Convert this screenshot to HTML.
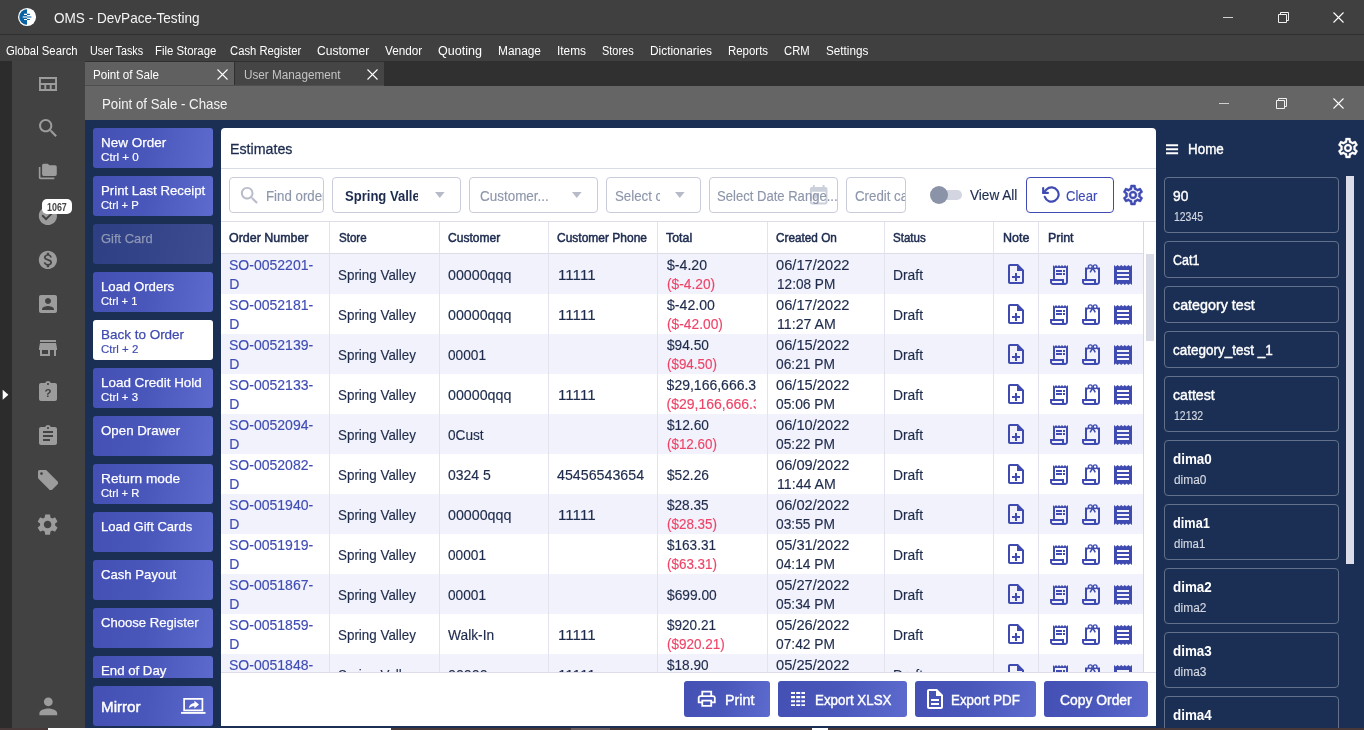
<!DOCTYPE html>
<html><head><meta charset="utf-8">
<style>
*{box-sizing:border-box;margin:0;padding:0}
html,body{width:1364px;height:730px;overflow:hidden;background:#404040;font-family:"Liberation Sans",sans-serif;}
.abs{position:absolute}
.t{position:absolute;white-space:nowrap;transform-origin:0 0;display:block}
.clip{position:absolute;overflow:hidden}
</style></head><body>
<svg width="0" height="0" style="position:absolute">
<defs>
<symbol id="i-note" viewBox="0 0 24 24"><path fill="#3f4bb0" d="M14 2H6c-1.100 0-2 .9-2 2v16c0 1.100.89 2 1.990 2H18c1.100 0 2-.9 2-2V8l-6-6zM6 20V4h7v5h5v11H6zm5-1h2v-3h3v-2h-3v-3h-2v3H8v2h3v3z"/></symbol>
<symbol id="i-r1" viewBox="0 0 24 24"><path fill="#3f4bb0" d="M19.500 3.500 18 2l-1.500 1.500L15 2l-1.500 1.500L12 2l-1.500 1.500L9 2 7.500 3.500 6 2v14H3v3c0 1.660 1.340 3 3 3h12c1.660 0 3-1.340 3-3V2l-1.500 1.500zM15 20H6c-.55 0-1-.45-1-1v-1h10v2zm4-1c0 .55-.45 1-1 1s-1-.45-1-1v-3H8V5h11v14z"/><path fill="#3f4bb0" d="M9 7h6v2H9zm7 0h2v2h-2zm-7 3h6v2H9zm7 0h2v2h-2z"/></symbol>
<symbol id="i-r2" viewBox="0 0 24 24"><path fill="#3f4bb0" d="M6 4.500V16H3v3c0 1.660 1.340 3 3 3h12c1.660 0 3-1.340 3-3V4.500h-3v2H19V19c0 .55-.45 1-1 1s-1-.45-1-1v-3H8V6.500h1.400v-2H6zM15 20H6c-.55 0-1-.45-1-1v-1h10v2z"/><g fill="none" stroke="#3f4bb0"><ellipse cx="11.300" cy="3.700" rx="1.900" ry="1.800" stroke-width="1.400"/><ellipse cx="16.100" cy="3.700" rx="1.900" ry="1.800" stroke-width="1.400"/><path d="M13.700 5L11.100 9.400M13.700 5l2.600 4.400" stroke-width="1.500"/></g></symbol>
<symbol id="i-r3" viewBox="0 0 24 24"><path fill="#3f4bb0" fill-rule="evenodd" d="M3 2L4.8 3.600L6.6 2L8.4 3.600L10.2 2L12.0 3.600L13.8 2L15.6 3.600L17.4 2L19.2 3.600L21 2V22L19.2 20.400L17.4 22L15.6 20.400L13.8 22L12.0 20.400L10.2 22L8.4 20.400L6.6 22L4.8 20.400L3 22zM18 17H6v-2h12v2zm0-4H6v-2h12v2zm0-4H6V7h12v2z"/></symbol>
</defs></svg>
<div id="root" style="position:absolute;left:0;top:0;width:1364px;height:730px;will-change:transform">
<div class="abs" style="left:0;top:0;width:1364px;height:34px;background:#404040"></div>
<div class="abs" style="left:0;top:34px;width:1364px;height:1px;background:#2f2f2f"></div>
<div class="abs" style="left:0;top:35px;width:1364px;height:26px;background:#404040"></div>
<svg class="abs" style="left:17px;top:7px" width="20" height="20" viewBox="0 0 20 20"><circle cx="10.050" cy="10" r="9.050" fill="#fff"/><path d="M10 2.250A7.750 7.750 0 0 0 10 17.750z" fill="#0b62a3"/><path d="M10 7.350h2.900M10 12.450h2.900" stroke="#0b62a3" stroke-width="1.050"/><path d="M10 10h4.400" stroke="#4f8fc0" stroke-width="1.500"/><path d="M7 7.350h3M7 12.450h3" stroke="#fff" stroke-width="1.050"/><path d="M5.700 10H10" stroke="#c5d9ea" stroke-width="1.500"/></svg>
<span class="t" style="left:54.00px;top:9px;font-size:15px;line-height:17px;height:17px;color:#f4f4f4;transform:scaleX(0.9044);">OMS - DevPace-Testing</span>
<div class="abs" style="left:1223px;top:17px;width:10px;height:1px;background:#d0d0d0"></div>
<svg class="abs" style="left:1278px;top:12px" width="12" height="11"><path d="M2.500 2.500V.5h8v8h-2M.5 2.500h8v8h-8z" stroke="#f0f0f0" fill="none" stroke-width="1"/></svg>
<svg class="abs" style="left:1333px;top:12px" width="11" height="11"><path d="M.5 .5l10 10M10.500 .5l-10 10" stroke="#fff" stroke-width="1.100"/></svg>
<span class="t" style="left:6.00px;top:44px;font-size:12.5px;line-height:14px;height:14px;color:#fff;transform:scaleX(0.9042);">Global Search</span>
<span class="t" style="left:90.00px;top:44px;font-size:12.5px;line-height:14px;height:14px;color:#fff;transform:scaleX(0.8609);">User Tasks</span>
<span class="t" style="left:155.00px;top:44px;font-size:12.5px;line-height:14px;height:14px;color:#fff;transform:scaleX(0.9098);">File Storage</span>
<span class="t" style="left:230.00px;top:44px;font-size:12.5px;line-height:14px;height:14px;color:#fff;transform:scaleX(0.9004);">Cash Register</span>
<span class="t" style="left:317.00px;top:44px;font-size:12.5px;line-height:14px;height:14px;color:#fff;transform:scaleX(0.9652);">Customer</span>
<span class="t" style="left:385.00px;top:44px;font-size:12.5px;line-height:14px;height:14px;color:#fff;transform:scaleX(0.9413);">Vendor</span>
<span class="t" style="left:438.00px;top:44px;font-size:12.5px;line-height:14px;height:14px;color:#fff;transform:scaleX(1.0043);">Quoting</span>
<span class="t" style="left:498.30px;top:44px;font-size:12.5px;line-height:14px;height:14px;color:#fff;transform:scaleX(0.9516);">Manage</span>
<span class="t" style="left:557.00px;top:44px;font-size:12.5px;line-height:14px;height:14px;color:#fff;transform:scaleX(0.9489);">Items</span>
<span class="t" style="left:602.00px;top:44px;font-size:12.5px;line-height:14px;height:14px;color:#fff;transform:scaleX(0.8747);">Stores</span>
<span class="t" style="left:650.00px;top:44px;font-size:12.5px;line-height:14px;height:14px;color:#fff;transform:scaleX(0.9493);">Dictionaries</span>
<span class="t" style="left:728.00px;top:44px;font-size:12.5px;line-height:14px;height:14px;color:#fff;transform:scaleX(0.9143);">Reports</span>
<span class="t" style="left:784.00px;top:44px;font-size:12.5px;line-height:14px;height:14px;color:#fff;transform:scaleX(0.9002);">CRM</span>
<span class="t" style="left:825.70px;top:44px;font-size:12.5px;line-height:14px;height:14px;color:#fff;transform:scaleX(0.9361);">Settings</span>
<div class="abs" style="left:0;top:61px;width:1364px;height:25px;background:#303030"></div>
<div class="abs" style="left:0;top:61px;width:12px;height:667px;background:#2c2c2c"></div>
<div class="abs" style="left:12px;top:61px;width:73px;height:667px;background:#424242"></div>
<div class="abs" style="left:85px;top:62px;width:149px;height:24px;background:#606060"></div>
<div class="abs" style="left:235px;top:62px;width:149px;height:24px;background:#454545"></div>
<div class="abs" style="left:85px;top:85px;width:299px;height:1px;background:#4e4e4e"></div>
<span class="t" style="left:93.40px;top:68px;font-size:12.5px;line-height:14px;height:14px;color:#fff;transform:scaleX(0.9312);">Point of Sale</span>
<span class="t" style="left:243.50px;top:68px;font-size:12.5px;line-height:14px;height:14px;color:#c4c4c4;transform:scaleX(0.9386);">User Management</span>
<svg class="abs" style="left:217px;top:69px" width="11" height="11"><path d="M.5 .5l10 10M10.500 .5l-10 10" stroke="#fff" stroke-width="1.100"/></svg>
<svg class="abs" style="left:367px;top:69px" width="11" height="11"><path d="M.5 .5l10 10M10.500 .5l-10 10" stroke="#fff" stroke-width="1.100"/></svg>
<svg class="abs" style="left:2px;top:389px" width="8" height="12"><path d="M.7 .7v10l5.700-5z" fill="#fff"/></svg>
<svg class="abs" style="left:36px;top:72px" width="24" height="24" viewBox="0 0 24 24"><path fill="none" stroke="#9c9c9c" stroke-width="1.900" d="M3.950 5.950h16.100v12.100H3.950zM4 12h16M9.300 12v6M14.700 12v6"/></svg>
<svg class="abs" style="left:35.95px;top:116.05px" width="24.5" height="24.5" viewBox="0 0 24 24"><path fill="#9c9c9c" d="M15.500 14h-.79l-.28-.27C15.410 12.590 16 11.110 16 9.500 16 5.910 13.090 3 9.500 3S3 5.910 3 9.500 5.910 16 9.500 16c1.610 0 3.090-.59 4.230-1.570l.27.28v.79l5 4.990L20.490 19l-4.990-5zm-6 0C7.010 14 5 11.990 5 9.500S7.010 5 9.500 5 14 7.010 14 9.500 11.990 14 9.500 14z"/></svg>
<svg class="abs" style="left:38.2px;top:161.89999999999998px" width="19.6" height="19.6" viewBox="0 0 24 24"><path fill="#9c9c9c" d="M3 6H1v13c0 1.100.9 2 2 2h17v-2H3V6z M21 4h-7l-2-2H7c-1.100 0-1.990.9-1.990 2L5 15c0 1.100.9 2 2 2h14c1.100 0 2-.9 2-2V6c0-1.100-.9-2-2-2z"/></svg>
<svg class="abs" style="left:37.1px;top:205.1px" width="21.8" height="21.8" viewBox="0 0 24 24"><path fill="#9c9c9c" d="M12 2C6.480 2 2 6.480 2 12s4.480 10 10 10 10-4.480 10-10S17.520 2 12 2zm-2 15l-5-5 1.410-1.410L10 14.170l7.590-7.590L19 8l-9 9z"/></svg>
<svg class="abs" style="left:37.1px;top:249.1px" width="21.8" height="21.8" viewBox="0 0 24 24"><path fill="#9c9c9c" d="M12 2C6.480 2 2 6.480 2 12s4.480 10 10 10 10-4.480 10-10S17.520 2 12 2zm1.410 16.090V20h-2.670v-1.930c-1.710-.36-3.160-1.460-3.270-3.400h1.960c.1 1.050.82 1.870 2.650 1.870 1.960 0 2.400-.98 2.400-1.590 0-.83-.44-1.610-2.670-2.140-2.480-.6-4.180-1.620-4.180-3.670 0-1.720 1.390-2.840 3.110-3.210V4h2.670v1.950c1.860.45 2.790 1.860 2.850 3.390H14.300c-.05-1.110-.64-1.870-2.220-1.870-1.500 0-2.400.68-2.400 1.640 0 .84.65 1.390 2.670 1.910s4.180 1.390 4.180 3.910c-.01 1.830-1.380 2.830-3.120 3.160z"/></svg>
<svg class="abs" style="left:36.0px;top:292.0px" width="24" height="24" viewBox="0 0 24 24"><path fill="#9c9c9c" d="M3 5v14c0 1.100.89 2 2 2h14c1.100 0 2-.9 2-2V5c0-1.100-.9-2-2-2H5c-1.110 0-2 .9-2 2zm12 4c0 1.660-1.340 3-3 3s-3-1.340-3-3 1.340-3 3-3 3 1.340 3 3zm-9 8c0-2 4-3.100 6-3.100s6 1.100 6 3.100v1H6v-1z"/></svg>
<svg class="abs" style="left:36.0px;top:336.0px" width="24" height="24" viewBox="0 0 24 24"><path fill="#9c9c9c" d="M20 4H4v2h16V4zm1 10v-2l-1-5H4l-1 5v2h1v6h10v-6h4v6h2v-6h1zm-9 4H6v-4h6v4z"/></svg>
<svg class="abs" style="left:36.0px;top:380.0px" width="24" height="24" viewBox="0 0 24 24"><path fill="#9c9c9c" d="M19 3h-4.180C14.400 1.840 13.300 1 12 1c-1.300 0-2.400.84-2.820 2H5c-1.100 0-2 .9-2 2v14c0 1.100.9 2 2 2h14c1.100 0 2-.9 2-2V5c0-1.100-.9-2-2-2zm-7 0c.55 0 1 .45 1 1s-.45 1-1 1-1-.45-1-1 .45-1 1-1z"/><text x="12" y="17.300" font-size="11.500" font-weight="bold" text-anchor="middle" fill="#424242" font-family="Liberation Sans">?</text></svg>
<svg class="abs" style="left:36.0px;top:424.0px" width="24" height="24" viewBox="0 0 24 24"><path fill="#9c9c9c" d="M19 3h-4.180C14.400 1.840 13.300 1 12 1c-1.300 0-2.400.84-2.820 2H5c-1.100 0-2 .9-2 2v14c0 1.100.9 2 2 2h14c1.100 0 2-.9 2-2V5c0-1.100-.9-2-2-2zm-7 0c.55 0 1 .45 1 1s-.45 1-1 1-1-.45-1-1 .45-1 1-1zm2 14H7v-2h7v2zm3-4H7v-2h10v2zm0-4H7V7h10v2z"/></svg>
<svg class="abs" style="left:37.900px;top:469.800px" width="20.400" height="20.400" viewBox="0 0 20.400 20.400"><path fill="#9c9c9c" fill-rule="evenodd" d="M1.600 0H7.500c.45 0 .85.170 1.150.47L19.900 11.700a1.550 1.550 0 0 1 0 2.200L13.900 19.900a1.550 1.550 0 0 1-2.200 0L.47 8.650A1.600 1.600 0 0 1 0 7.500V1.600A1.600 1.600 0 0 1 1.600 0zM3.500 2.200a1.400 1.400 0 1 0 0 2.800 1.400 1.400 0 0 0 0-2.800z"/></svg>
<svg class="abs" style="left:35.4px;top:511.7px" width="25.2" height="25.2" viewBox="0 0 24 24"><path fill="#9c9c9c" d="M19.140 12.940c.04-.3.060-.61.060-.94 0-.32-.02-.64-.07-.94l2.030-1.580c.18-.14.230-.41.120-.61l-1.920-3.320c-.12-.22-.37-.29-.59-.22l-2.390.96c-.5-.38-1.030-.7-1.620-.94l-.36-2.540c-.04-.24-.24-.41-.48-.41h-3.840c-.24 0-.43.170-.47.410l-.36 2.540c-.59.24-1.130.57-1.620.94l-2.390-.96c-.22-.08-.47 0-.59.220L2.740 8.870c-.12.210-.08.470.12.610l2.030 1.580c-.05.3-.09.630-.09.940s.2.640.07.940l-2.030 1.580c-.18.140-.23.410-.12.610l1.920 3.320c.12.220.37.290.59.220l2.390-.96c.5.380 1.030.7 1.620.94l.36 2.540c.05.240.24.410.48.410h3.840c.24 0 .44-.17.470-.41l.36-2.540c.59-.24 1.130-.56 1.620-.94l2.390.96c.22.080.47 0 .59-.22l1.920-3.320c.12-.22.070-.47-.12-.61l-2.010-1.580zM12 15.600c-1.980 0-3.600-1.620-3.600-3.600s1.620-3.600 3.600-3.600 3.600 1.620 3.600 3.600-1.620 3.600-3.600 3.600z"/></svg>
<svg class="abs" style="left:34.800000000000004px;top:693.0px" width="26.6" height="26.6" viewBox="0 0 24 24"><path fill="#9c9c9c" d="M12 12c2.210 0 4-1.790 4-4s-1.790-4-4-4-4 1.790-4 4 1.790 4 4 4zm0 2c-2.670 0-8 1.340-8 4v2h16v-2c0-2.660-5.330-4-8-4z"/></svg>
<div class="abs" style="left:42px;top:199px;width:30px;height:15px;border-radius:5px;background:#fff"></div>
<span class="t" style="left:47.20px;top:201.5px;font-size:10px;line-height:11px;height:11px;color:#444;transform:scaleX(0.8899);font-weight:bold;">1067</span>
<div class="abs" style="left:85px;top:86px;width:1279px;height:34px;background:#656565"></div>
<span class="t" style="left:101.50px;top:96px;font-size:14.5px;line-height:16px;height:16px;color:#f4f4f4;transform:scaleX(0.9159);">Point of Sale - Chase</span>
<div class="abs" style="left:1219px;top:103px;width:10px;height:1px;background:#d0d0d0"></div>
<svg class="abs" style="left:1276px;top:98px" width="12" height="11"><path d="M2.500 2.500V.5h8v8h-2M.5 2.500h8v8h-8z" stroke="#f0f0f0" fill="none" stroke-width="1"/></svg>
<svg class="abs" style="left:1333px;top:98px" width="11" height="11"><path d="M.5 .5l10 10M10.500 .5l-10 10" stroke="#fff" stroke-width="1.100"/></svg>
<div class="abs" style="left:85px;top:120px;width:1279px;height:608px;background:#1b2f55"></div>
<div class="abs" style="left:85px;top:120px;width:136px;height:558px;overflow:hidden">
<div class="abs" style="left:8px;top:8px;width:120px;height:40px;border-radius:3px;background:linear-gradient(100deg,#4450b4 0%,#4a57ba 45%,#5d6bce 100%)"></div>
<span class="t" style="left:16.40px;top:15px;font-size:13.5px;line-height:15px;height:15px;color:#fff;transform:scaleX(0.9989);-webkit-text-stroke:0.25px #fff;">New Order</span>
<span class="t" style="left:16.40px;top:31px;font-size:10.5px;line-height:12px;height:12px;color:#fff;transform:scaleX(1.1077);-webkit-text-stroke:0.15px #fff;">Ctrl + 0</span>
<div class="abs" style="left:8px;top:56px;width:120px;height:40px;border-radius:3px;background:linear-gradient(100deg,#4450b4 0%,#4a57ba 45%,#5d6bce 100%)"></div>
<span class="t" style="left:16.40px;top:63px;font-size:13.5px;line-height:15px;height:15px;color:#fff;transform:scaleX(0.9776);-webkit-text-stroke:0.25px #fff;">Print Last Receipt</span>
<span class="t" style="left:16.40px;top:79px;font-size:10.5px;line-height:12px;height:12px;color:#fff;transform:scaleX(1.0714);-webkit-text-stroke:0.15px #fff;">Ctrl + P</span>
<div class="abs" style="left:8px;top:104px;width:120px;height:40px;border-radius:3px;background:linear-gradient(100deg,#2f3f83 0%,#344488 45%,#3e4c92 100%)"></div>
<span class="t" style="left:16.40px;top:111px;font-size:13.5px;line-height:15px;height:15px;color:#8d97b6;transform:scaleX(0.9593);-webkit-text-stroke:0.25px #8d97b6;">Gift Card</span>
<div class="abs" style="left:8px;top:152px;width:120px;height:40px;border-radius:3px;background:linear-gradient(100deg,#4450b4 0%,#4a57ba 45%,#5d6bce 100%)"></div>
<span class="t" style="left:16.40px;top:159px;font-size:13.5px;line-height:15px;height:15px;color:#fff;transform:scaleX(0.9752);-webkit-text-stroke:0.25px #fff;">Load Orders</span>
<span class="t" style="left:16.40px;top:175px;font-size:10.5px;line-height:12px;height:12px;color:#fff;transform:scaleX(1.0667);-webkit-text-stroke:0.15px #fff;">Ctrl + 1</span>
<div class="abs" style="left:8px;top:200px;width:120px;height:40px;border-radius:3px;background:#fff"></div>
<span class="t" style="left:16.40px;top:207px;font-size:13.5px;line-height:15px;height:15px;color:#3f4bb0;transform:scaleX(0.9977);-webkit-text-stroke:0.25px #3f4bb0;">Back to Order</span>
<span class="t" style="left:16.40px;top:223px;font-size:10.5px;line-height:12px;height:12px;color:#3f4bb0;transform:scaleX(1.0930);-webkit-text-stroke:0.15px #3f4bb0;">Ctrl + 2</span>
<div class="abs" style="left:8px;top:248px;width:120px;height:40px;border-radius:3px;background:linear-gradient(100deg,#4450b4 0%,#4a57ba 45%,#5d6bce 100%)"></div>
<span class="t" style="left:16.40px;top:255px;font-size:13.5px;line-height:15px;height:15px;color:#fff;transform:scaleX(0.9949);-webkit-text-stroke:0.25px #fff;">Load Credit Hold</span>
<span class="t" style="left:16.40px;top:271px;font-size:10.5px;line-height:12px;height:12px;color:#fff;transform:scaleX(1.0842);-webkit-text-stroke:0.15px #fff;">Ctrl + 3</span>
<div class="abs" style="left:8px;top:296px;width:120px;height:40px;border-radius:3px;background:linear-gradient(100deg,#4450b4 0%,#4a57ba 45%,#5d6bce 100%)"></div>
<span class="t" style="left:16.40px;top:303px;font-size:13.5px;line-height:15px;height:15px;color:#fff;transform:scaleX(0.9856);-webkit-text-stroke:0.25px #fff;">Open Drawer</span>
<div class="abs" style="left:8px;top:344px;width:120px;height:40px;border-radius:3px;background:linear-gradient(100deg,#4450b4 0%,#4a57ba 45%,#5d6bce 100%)"></div>
<span class="t" style="left:16.40px;top:351px;font-size:13.5px;line-height:15px;height:15px;color:#fff;transform:scaleX(1.0137);-webkit-text-stroke:0.25px #fff;">Return mode</span>
<span class="t" style="left:16.40px;top:367px;font-size:10.5px;line-height:12px;height:12px;color:#fff;transform:scaleX(1.0709);-webkit-text-stroke:0.15px #fff;">Ctrl + R</span>
<div class="abs" style="left:8px;top:392px;width:120px;height:40px;border-radius:3px;background:linear-gradient(100deg,#4450b4 0%,#4a57ba 45%,#5d6bce 100%)"></div>
<span class="t" style="left:16.40px;top:399px;font-size:13.5px;line-height:15px;height:15px;color:#fff;transform:scaleX(0.9644);-webkit-text-stroke:0.25px #fff;">Load Gift Cards</span>
<div class="abs" style="left:8px;top:440px;width:120px;height:40px;border-radius:3px;background:linear-gradient(100deg,#4450b4 0%,#4a57ba 45%,#5d6bce 100%)"></div>
<span class="t" style="left:16.40px;top:447px;font-size:13.5px;line-height:15px;height:15px;color:#fff;transform:scaleX(0.9730);-webkit-text-stroke:0.25px #fff;">Cash Payout</span>
<div class="abs" style="left:8px;top:488px;width:120px;height:40px;border-radius:3px;background:linear-gradient(100deg,#4450b4 0%,#4a57ba 45%,#5d6bce 100%)"></div>
<span class="t" style="left:16.40px;top:495px;font-size:13.5px;line-height:15px;height:15px;color:#fff;transform:scaleX(0.9704);-webkit-text-stroke:0.25px #fff;">Choose Register</span>
<div class="abs" style="left:8px;top:536px;width:120px;height:40px;border-radius:3px;background:linear-gradient(100deg,#4450b4 0%,#4a57ba 45%,#5d6bce 100%)"></div>
<span class="t" style="left:16.40px;top:543px;font-size:13.5px;line-height:15px;height:15px;color:#fff;transform:scaleX(0.9782);-webkit-text-stroke:0.25px #fff;">End of Day</span>
</div>
<div class="abs" style="left:93px;top:686px;width:120px;height:40px;border-radius:3px;background:linear-gradient(100deg,#4450b4 0%,#4a57ba 45%,#5d6bce 100%)"></div>
<span class="t" style="left:101.20px;top:699px;font-size:14px;line-height:16px;height:16px;color:#fff;transform:scaleX(1.0837);-webkit-text-stroke:0.4px #fff;">Mirror</span>
<svg class="abs" style="left:181px;top:697px" width="24.500" height="18" viewBox="0 0 24.500 18"><path fill="none" stroke="#fff" stroke-width="1.700" d="M3.100 1.850h18.300v11.500H3.100z"/><path d="M0 15.900h24.500" stroke="#fff" stroke-width="1.900"/><path fill="#fff" d="M7.800 11.300c.5-3.100 2.600-4.900 5.600-5.200V3.700l4.600 3.900-4.600 3.900V9.200c-2.300 0-4.100.6-5.600 2.100z"/></svg>
<div class="abs" style="left:221px;top:128px;width:935px;height:598px;background:#fff;border-radius:4px 4px 0 0"></div>
<span class="t" style="left:229.80px;top:140px;font-size:15.5px;line-height:17px;height:17px;color:#1d2b4f;transform:scaleX(0.9170);-webkit-text-stroke:0.3px #1d2b4f;">Estimates</span>
<div class="abs" style="left:221px;top:168px;width:935px;height:1px;background:#d9dbe5"></div>
<div class="abs" style="left:229px;top:177px;width:95px;height:36px;border:1px solid #c9ccda;border-radius:4px;background:#fff"></div>
<svg class="abs" style="left:237.6px;top:184.2px" width="23.2" height="23.2" viewBox="0 0 24 24"><path fill="#b9bdca" d="M15.500 14h-.79l-.28-.27C15.410 12.590 16 11.110 16 9.500 16 5.910 13.090 3 9.500 3S3 5.910 3 9.500 5.910 16 9.500 16c1.610 0 3.090-.59 4.230-1.570l.27.28v.79l5 4.990L20.490 19l-4.990-5zm-6 0C7.010 14 5 11.990 5 9.500S7.010 5 9.500 5 14 7.010 14 9.500 11.990 14 9.500 14z"/></svg>
<div class="clip" style="left:265.90px;top:188px;width:57.10px;height:16px"><span class="t" style="left:0;top:0;font-size:14px;line-height:16px;height:16px;color:#8d96ab;transform:scaleX(0.9480);-webkit-text-stroke:0.15px #8d96ab;">Find order</span></div>
<div class="abs" style="left:332px;top:177px;width:129px;height:36px;border:1px solid #c9ccda;border-radius:4px;background:#fff"></div>
<div class="clip" style="left:344.80px;top:188px;width:73.20px;height:16px"><span class="t" style="left:0;top:0;font-size:14px;line-height:16px;height:16px;color:#1d2b4f;transform:scaleX(0.9320);font-weight:bold;">Spring Valley</span></div>
<svg class="abs" style="left:435px;top:192px" width="10" height="6"><path d="M0 0h9.600L4.800 6z" fill="#b7bbc8"/></svg>
<div class="abs" style="left:469px;top:177px;width:129px;height:36px;border:1px solid #c9ccda;border-radius:4px;background:#fff"></div>
<span class="t" style="left:480.00px;top:188px;font-size:14px;line-height:16px;height:16px;color:#8d96ab;transform:scaleX(0.9608);-webkit-text-stroke:0.15px #8d96ab;">Customer...</span>
<svg class="abs" style="left:572px;top:192px" width="10" height="6"><path d="M0 0h9.600L4.800 6z" fill="#b7bbc8"/></svg>
<div class="abs" style="left:606px;top:177px;width:95px;height:36px;border:1px solid #c9ccda;border-radius:4px;background:#fff"></div>
<div class="clip" style="left:614.80px;top:188px;width:45.20px;height:16px"><span class="t" style="left:0;top:0;font-size:14px;line-height:16px;height:16px;color:#8d96ab;transform:scaleX(0.9480);-webkit-text-stroke:0.15px #8d96ab;">Select creator</span></div>
<svg class="abs" style="left:675px;top:192px" width="10" height="6"><path d="M0 0h9.600L4.800 6z" fill="#b7bbc8"/></svg>
<div class="abs" style="left:709px;top:177px;width:129px;height:36px;border:1px solid #c9ccda;border-radius:4px;background:#fff"></div>
<svg class="abs" style="left:806.700px;top:184.300px" width="23.400" height="23.400" viewBox="0 0 24 24"><path fill="#ccd0da" d="M19 3h-1V1h-2v2H8V1H6v2H5c-1.100 0-2 .9-2 2v14c0 1.100.9 2 2 2h14c1.100 0 2-.9 2-2V5c0-1.100-.9-2-2-2zm0 16H5V8h14v11zM7 10h5v5H7z"/></svg>
<span class="t" style="left:716.80px;top:188px;font-size:14px;line-height:16px;height:16px;color:#8d96ab;transform:scaleX(0.9333);-webkit-text-stroke:0.15px #8d96ab;">Select Date Range...</span>
<div class="abs" style="left:846px;top:177px;width:60px;height:36px;border:1px solid #c9ccda;border-radius:4px;background:#fff"></div>
<div class="clip" style="left:854.80px;top:188px;width:50.20px;height:16px"><span class="t" style="left:0;top:0;font-size:14px;line-height:16px;height:16px;color:#8d96ab;transform:scaleX(0.9480);-webkit-text-stroke:0.15px #8d96ab;">Credit card</span></div>
<div class="abs" style="left:933px;top:190px;width:29px;height:10px;border-radius:5px;background:#d3d6e0"></div>
<div class="abs" style="left:930px;top:186px;width:18px;height:18px;border-radius:9px;background:#8b93a8"></div>
<span class="t" style="left:970.30px;top:187px;font-size:14px;line-height:16px;height:16px;color:#1d2b4f;transform:scaleX(0.9715);-webkit-text-stroke:0.15px #1d2b4f;">View All</span>
<div class="abs" style="left:1026px;top:177px;width:88px;height:36px;border:1.500px solid #3f4bb3;border-radius:4px"></div>
<svg class="abs" style="left:1041.600px;top:184.600px" width="19" height="19" viewBox="0 0 24 24"><g fill="none" stroke="#3f4bb3" stroke-width="2.700" stroke-linecap="round" stroke-linejoin="round"><path d="M1.500 4v6h6"/><path d="M3.510 15a9 9 0 1 0 2.130-9.360L1.500 10"/></g></svg>
<span class="t" style="left:1065.80px;top:186.5px;font-size:15px;line-height:17px;height:17px;color:#3f4bb3;transform:scaleX(0.8731);-webkit-text-stroke:0.15px #3f4bb3;">Clear</span>
<svg class="abs" style="left:1121px;top:183px" width="24" height="24" viewBox="0 0 24 24"><path stroke="#3f4bb3" stroke-width="0.500" fill="#3f4bb3" d="M19.430 12.980c.04-.32.070-.64.070-.98 0-.34-.03-.66-.07-.98l2.110-1.650c.19-.15.240-.42.120-.64l-2-3.460c-.09-.16-.26-.25-.44-.25-.06 0-.12.010-.17.030l-2.490 1c-.52-.4-1.080-.73-1.690-.98l-.38-2.650C14.460 2.180 14.250 2 14 2h-4c-.25 0-.46.180-.49.420l-.38 2.650c-.61.250-1.170.59-1.690.98l-2.490-1c-.06-.02-.12-.03-.18-.03-.17 0-.34.090-.43.250l-2 3.460c-.13.220-.07.490.12.640l2.110 1.650c-.04.320-.07.650-.07.980 0 .33.030.66.070.98l-2.110 1.650c-.19.150-.24.420-.12.640l2 3.460c.09.160.26.250.44.250.06 0 .12-.01.170-.03l2.490-1c.52.4 1.080.73 1.690.98l.38 2.650c.03.240.24.420.49.420h4c.25 0 .46-.18.490-.42l.38-2.650c.61-.25 1.170-.59 1.690-.98l2.490 1c.06.020.12.030.18.030.17 0 .34-.09.43-.25l2-3.460c.12-.22.070-.49-.12-.64l-2.110-1.650zm-1.980-1.710c.04.310.05.520.05.730 0 .21-.02.430-.05.730l-.14 1.130.89.700 1.080.84-.7 1.210-1.270-.51-1.040-.42-.9.680c-.43.320-.84.560-1.250.73l-1.060.43-.16 1.130-.2 1.350h-1.400l-.19-1.350-.16-1.130-1.060-.43c-.43-.18-.83-.41-1.230-.71l-.91-.7-1.060.43-1.270.51-.7-1.210 1.080-.84.890-.7-.14-1.130c-.03-.31-.05-.54-.05-.74s.02-.43.050-.73l.14-1.130-.89-.7-1.080-.84.7-1.210 1.270.51 1.040.42.900-.68c.43-.32.840-.56 1.250-.73l1.060-.43.160-1.130.2-1.350h1.390l.19 1.350.16 1.130 1.060.43c.43.180.83.410 1.230.71l.91.7 1.060-.43 1.270-.51.7 1.210-1.070.85-.89.70.14 1.130zM12 8c-2.210 0-4 1.790-4 4s1.790 4 4 4 4-1.790 4-4-1.790-4-4-4zm0 6c-1.100 0-2-.9-2-2s.9-2 2-2 2 .9 2 2-.9 2-2 2z"/></svg>
<div class="abs" style="left:221px;top:221px;width:935px;height:451px;overflow:hidden">
<div class="abs" style="left:0;top:33px;width:923px;height:40px;background:#f1f2fb"></div>
<span class="t" style="left:8.00px;top:36px;font-size:14px;line-height:16px;height:16px;color:#3f4cb4;transform:scaleX(1.0015);-webkit-text-stroke:0.15px #3f4cb4;">SO-0052201-</span>
<span class="t" style="left:8.20px;top:55px;font-size:14px;line-height:16px;height:16px;color:#3f4cb4;transform:scaleX(1.0000);-webkit-text-stroke:0.15px #3f4cb4;">D</span>
<span class="t" style="left:117.40px;top:46px;font-size:14px;line-height:16px;height:16px;color:#1e2b4c;transform:scaleX(0.9573);-webkit-text-stroke:0.15px #1e2b4c;">Spring Valley</span>
<span class="t" style="left:227.00px;top:46px;font-size:14px;line-height:16px;height:16px;color:#1e2b4c;transform:scaleX(1.0177);-webkit-text-stroke:0.15px #1e2b4c;">00000qqq</span>
<span class="t" style="left:336.80px;top:46px;font-size:14px;line-height:16px;height:16px;color:#1e2b4c;transform:scaleX(1.0808);-webkit-text-stroke:0.15px #1e2b4c;">11111</span>
<span class="t" style="left:445.60px;top:36px;font-size:14px;line-height:16px;height:16px;color:#1e2b4c;transform:scaleX(1.0078);-webkit-text-stroke:0.15px #1e2b4c;">$-4.20</span>
<span class="t" style="left:445.60px;top:55px;font-size:14px;line-height:16px;height:16px;color:#ee4468;transform:scaleX(0.9816);-webkit-text-stroke:0.15px #ee4468;">($-4.20)</span>
<span class="t" style="left:555.20px;top:36px;font-size:14px;line-height:16px;height:16px;color:#1e2b4c;transform:scaleX(1.0490);-webkit-text-stroke:0.15px #1e2b4c;">06/17/2022</span>
<span class="t" style="left:556.30px;top:55px;font-size:14px;line-height:16px;height:16px;color:#1e2b4c;transform:scaleX(0.9713);-webkit-text-stroke:0.15px #1e2b4c;">12:08 PM</span>
<span class="t" style="left:672.40px;top:46px;font-size:14px;line-height:16px;height:16px;color:#1e2b4c;transform:scaleX(0.9898);-webkit-text-stroke:0.15px #1e2b4c;">Draft</span>
<svg class="abs" style="left:783px;top:41px" width="24" height="24"><use href="#i-note"/></svg>
<svg class="abs" style="left:826px;top:42px" width="24" height="24"><use href="#i-r1"/></svg>
<svg class="abs" style="left:858px;top:42px" width="24" height="24"><use href="#i-r2"/></svg>
<svg class="abs" style="left:890px;top:42px" width="24" height="24"><use href="#i-r3"/></svg>
<div class="abs" style="left:0;top:73px;width:923px;height:40px;background:#fff"></div>
<span class="t" style="left:8.00px;top:76px;font-size:14px;line-height:16px;height:16px;color:#3f4cb4;transform:scaleX(1.0015);-webkit-text-stroke:0.15px #3f4cb4;">SO-0052181-</span>
<span class="t" style="left:8.20px;top:95px;font-size:14px;line-height:16px;height:16px;color:#3f4cb4;transform:scaleX(1.0000);-webkit-text-stroke:0.15px #3f4cb4;">D</span>
<span class="t" style="left:117.40px;top:86px;font-size:14px;line-height:16px;height:16px;color:#1e2b4c;transform:scaleX(0.9573);-webkit-text-stroke:0.15px #1e2b4c;">Spring Valley</span>
<span class="t" style="left:227.00px;top:86px;font-size:14px;line-height:16px;height:16px;color:#1e2b4c;transform:scaleX(1.0177);-webkit-text-stroke:0.15px #1e2b4c;">00000qqq</span>
<span class="t" style="left:336.80px;top:86px;font-size:14px;line-height:16px;height:16px;color:#1e2b4c;transform:scaleX(1.0808);-webkit-text-stroke:0.15px #1e2b4c;">11111</span>
<span class="t" style="left:445.60px;top:76px;font-size:14px;line-height:16px;height:16px;color:#1e2b4c;transform:scaleX(1.0072);-webkit-text-stroke:0.15px #1e2b4c;">$-42.00</span>
<span class="t" style="left:445.60px;top:95px;font-size:14px;line-height:16px;height:16px;color:#ee4468;transform:scaleX(0.9835);-webkit-text-stroke:0.15px #ee4468;">($-42.00)</span>
<span class="t" style="left:555.20px;top:76px;font-size:14px;line-height:16px;height:16px;color:#1e2b4c;transform:scaleX(1.0490);-webkit-text-stroke:0.15px #1e2b4c;">06/17/2022</span>
<span class="t" style="left:556.30px;top:95px;font-size:14px;line-height:16px;height:16px;color:#1e2b4c;transform:scaleX(1.0138);-webkit-text-stroke:0.15px #1e2b4c;">11:27 AM</span>
<span class="t" style="left:672.40px;top:86px;font-size:14px;line-height:16px;height:16px;color:#1e2b4c;transform:scaleX(0.9898);-webkit-text-stroke:0.15px #1e2b4c;">Draft</span>
<svg class="abs" style="left:783px;top:81px" width="24" height="24"><use href="#i-note"/></svg>
<svg class="abs" style="left:826px;top:82px" width="24" height="24"><use href="#i-r1"/></svg>
<svg class="abs" style="left:858px;top:82px" width="24" height="24"><use href="#i-r2"/></svg>
<svg class="abs" style="left:890px;top:82px" width="24" height="24"><use href="#i-r3"/></svg>
<div class="abs" style="left:0;top:113px;width:923px;height:40px;background:#f1f2fb"></div>
<span class="t" style="left:8.00px;top:116px;font-size:14px;line-height:16px;height:16px;color:#3f4cb4;transform:scaleX(1.0015);-webkit-text-stroke:0.15px #3f4cb4;">SO-0052139-</span>
<span class="t" style="left:8.20px;top:135px;font-size:14px;line-height:16px;height:16px;color:#3f4cb4;transform:scaleX(1.0000);-webkit-text-stroke:0.15px #3f4cb4;">D</span>
<span class="t" style="left:117.40px;top:126px;font-size:14px;line-height:16px;height:16px;color:#1e2b4c;transform:scaleX(0.9573);-webkit-text-stroke:0.15px #1e2b4c;">Spring Valley</span>
<span class="t" style="left:227.00px;top:126px;font-size:14px;line-height:16px;height:16px;color:#1e2b4c;transform:scaleX(0.9764);-webkit-text-stroke:0.15px #1e2b4c;">00001</span>
<span class="t" style="left:445.60px;top:116px;font-size:14px;line-height:16px;height:16px;color:#1e2b4c;transform:scaleX(0.9781);-webkit-text-stroke:0.15px #1e2b4c;">$94.50</span>
<span class="t" style="left:445.60px;top:135px;font-size:14px;line-height:16px;height:16px;color:#ee4468;transform:scaleX(0.9569);-webkit-text-stroke:0.15px #ee4468;">($94.50)</span>
<span class="t" style="left:555.20px;top:116px;font-size:14px;line-height:16px;height:16px;color:#1e2b4c;transform:scaleX(1.0490);-webkit-text-stroke:0.15px #1e2b4c;">06/15/2022</span>
<span class="t" style="left:555.20px;top:135px;font-size:14px;line-height:16px;height:16px;color:#1e2b4c;transform:scaleX(0.9846);-webkit-text-stroke:0.15px #1e2b4c;">06:21 PM</span>
<span class="t" style="left:672.40px;top:126px;font-size:14px;line-height:16px;height:16px;color:#1e2b4c;transform:scaleX(0.9898);-webkit-text-stroke:0.15px #1e2b4c;">Draft</span>
<svg class="abs" style="left:783px;top:121px" width="24" height="24"><use href="#i-note"/></svg>
<svg class="abs" style="left:826px;top:122px" width="24" height="24"><use href="#i-r1"/></svg>
<svg class="abs" style="left:858px;top:122px" width="24" height="24"><use href="#i-r2"/></svg>
<svg class="abs" style="left:890px;top:122px" width="24" height="24"><use href="#i-r3"/></svg>
<div class="abs" style="left:0;top:153px;width:923px;height:40px;background:#fff"></div>
<span class="t" style="left:8.00px;top:156px;font-size:14px;line-height:16px;height:16px;color:#3f4cb4;transform:scaleX(1.0015);-webkit-text-stroke:0.15px #3f4cb4;">SO-0052133-</span>
<span class="t" style="left:8.20px;top:175px;font-size:14px;line-height:16px;height:16px;color:#3f4cb4;transform:scaleX(1.0000);-webkit-text-stroke:0.15px #3f4cb4;">D</span>
<span class="t" style="left:117.40px;top:166px;font-size:14px;line-height:16px;height:16px;color:#1e2b4c;transform:scaleX(0.9573);-webkit-text-stroke:0.15px #1e2b4c;">Spring Valley</span>
<span class="t" style="left:227.00px;top:166px;font-size:14px;line-height:16px;height:16px;color:#1e2b4c;transform:scaleX(1.0177);-webkit-text-stroke:0.15px #1e2b4c;">00000qqq</span>
<span class="t" style="left:336.80px;top:166px;font-size:14px;line-height:16px;height:16px;color:#1e2b4c;transform:scaleX(1.0808);-webkit-text-stroke:0.15px #1e2b4c;">11111</span>
<div class="clip" style="left:445.60px;top:156px;width:89.40px;height:16px"><span class="t" style="left:0;top:0;font-size:14px;line-height:16px;height:16px;color:#1e2b4c;transform:scaleX(1.0000);-webkit-text-stroke:0.15px #1e2b4c;">$29,166,666.3</span></div>
<div class="clip" style="left:445.60px;top:175px;width:89.40px;height:16px"><span class="t" style="left:0;top:0;font-size:14px;line-height:16px;height:16px;color:#ee4468;transform:scaleX(1.0000);-webkit-text-stroke:0.15px #ee4468;">($29,166,666.3</span></div>
<span class="t" style="left:555.20px;top:156px;font-size:14px;line-height:16px;height:16px;color:#1e2b4c;transform:scaleX(1.0490);-webkit-text-stroke:0.15px #1e2b4c;">06/15/2022</span>
<span class="t" style="left:555.20px;top:175px;font-size:14px;line-height:16px;height:16px;color:#1e2b4c;transform:scaleX(0.9846);-webkit-text-stroke:0.15px #1e2b4c;">05:06 PM</span>
<span class="t" style="left:672.40px;top:166px;font-size:14px;line-height:16px;height:16px;color:#1e2b4c;transform:scaleX(0.9898);-webkit-text-stroke:0.15px #1e2b4c;">Draft</span>
<svg class="abs" style="left:783px;top:161px" width="24" height="24"><use href="#i-note"/></svg>
<svg class="abs" style="left:826px;top:162px" width="24" height="24"><use href="#i-r1"/></svg>
<svg class="abs" style="left:858px;top:162px" width="24" height="24"><use href="#i-r2"/></svg>
<svg class="abs" style="left:890px;top:162px" width="24" height="24"><use href="#i-r3"/></svg>
<div class="abs" style="left:0;top:193px;width:923px;height:40px;background:#f1f2fb"></div>
<span class="t" style="left:8.00px;top:196px;font-size:14px;line-height:16px;height:16px;color:#3f4cb4;transform:scaleX(1.0015);-webkit-text-stroke:0.15px #3f4cb4;">SO-0052094-</span>
<span class="t" style="left:8.20px;top:215px;font-size:14px;line-height:16px;height:16px;color:#3f4cb4;transform:scaleX(1.0000);-webkit-text-stroke:0.15px #3f4cb4;">D</span>
<span class="t" style="left:117.40px;top:206px;font-size:14px;line-height:16px;height:16px;color:#1e2b4c;transform:scaleX(0.9573);-webkit-text-stroke:0.15px #1e2b4c;">Spring Valley</span>
<span class="t" style="left:227.00px;top:206px;font-size:14px;line-height:16px;height:16px;color:#1e2b4c;transform:scaleX(0.9743);-webkit-text-stroke:0.15px #1e2b4c;">0Cust</span>
<span class="t" style="left:445.60px;top:196px;font-size:14px;line-height:16px;height:16px;color:#1e2b4c;transform:scaleX(0.9781);-webkit-text-stroke:0.15px #1e2b4c;">$12.60</span>
<span class="t" style="left:445.60px;top:215px;font-size:14px;line-height:16px;height:16px;color:#ee4468;transform:scaleX(0.9569);-webkit-text-stroke:0.15px #ee4468;">($12.60)</span>
<span class="t" style="left:555.20px;top:196px;font-size:14px;line-height:16px;height:16px;color:#1e2b4c;transform:scaleX(1.0490);-webkit-text-stroke:0.15px #1e2b4c;">06/10/2022</span>
<span class="t" style="left:555.20px;top:215px;font-size:14px;line-height:16px;height:16px;color:#1e2b4c;transform:scaleX(0.9846);-webkit-text-stroke:0.15px #1e2b4c;">05:22 PM</span>
<span class="t" style="left:672.40px;top:206px;font-size:14px;line-height:16px;height:16px;color:#1e2b4c;transform:scaleX(0.9898);-webkit-text-stroke:0.15px #1e2b4c;">Draft</span>
<svg class="abs" style="left:783px;top:201px" width="24" height="24"><use href="#i-note"/></svg>
<svg class="abs" style="left:826px;top:202px" width="24" height="24"><use href="#i-r1"/></svg>
<svg class="abs" style="left:858px;top:202px" width="24" height="24"><use href="#i-r2"/></svg>
<svg class="abs" style="left:890px;top:202px" width="24" height="24"><use href="#i-r3"/></svg>
<div class="abs" style="left:0;top:233px;width:923px;height:40px;background:#fff"></div>
<span class="t" style="left:8.00px;top:236px;font-size:14px;line-height:16px;height:16px;color:#3f4cb4;transform:scaleX(1.0015);-webkit-text-stroke:0.15px #3f4cb4;">SO-0052082-</span>
<span class="t" style="left:8.20px;top:255px;font-size:14px;line-height:16px;height:16px;color:#3f4cb4;transform:scaleX(1.0000);-webkit-text-stroke:0.15px #3f4cb4;">D</span>
<span class="t" style="left:117.40px;top:246px;font-size:14px;line-height:16px;height:16px;color:#1e2b4c;transform:scaleX(0.9573);-webkit-text-stroke:0.15px #1e2b4c;">Spring Valley</span>
<span class="t" style="left:227.00px;top:246px;font-size:14px;line-height:16px;height:16px;color:#1e2b4c;transform:scaleX(0.9991);-webkit-text-stroke:0.15px #1e2b4c;">0324 5</span>
<span class="t" style="left:336.30px;top:246px;font-size:14px;line-height:16px;height:16px;color:#1e2b4c;transform:scaleX(1.0166);-webkit-text-stroke:0.15px #1e2b4c;">45456543654</span>
<span class="t" style="left:445.60px;top:246px;font-size:14px;line-height:16px;height:16px;color:#1e2b4c;transform:scaleX(0.9781);-webkit-text-stroke:0.15px #1e2b4c;">$52.26</span>
<span class="t" style="left:555.20px;top:236px;font-size:14px;line-height:16px;height:16px;color:#1e2b4c;transform:scaleX(1.0490);-webkit-text-stroke:0.15px #1e2b4c;">06/09/2022</span>
<span class="t" style="left:556.30px;top:255px;font-size:14px;line-height:16px;height:16px;color:#1e2b4c;transform:scaleX(1.0138);-webkit-text-stroke:0.15px #1e2b4c;">11:44 AM</span>
<span class="t" style="left:672.40px;top:246px;font-size:14px;line-height:16px;height:16px;color:#1e2b4c;transform:scaleX(0.9898);-webkit-text-stroke:0.15px #1e2b4c;">Draft</span>
<svg class="abs" style="left:783px;top:241px" width="24" height="24"><use href="#i-note"/></svg>
<svg class="abs" style="left:826px;top:242px" width="24" height="24"><use href="#i-r1"/></svg>
<svg class="abs" style="left:858px;top:242px" width="24" height="24"><use href="#i-r2"/></svg>
<svg class="abs" style="left:890px;top:242px" width="24" height="24"><use href="#i-r3"/></svg>
<div class="abs" style="left:0;top:273px;width:923px;height:40px;background:#f1f2fb"></div>
<span class="t" style="left:8.00px;top:276px;font-size:14px;line-height:16px;height:16px;color:#3f4cb4;transform:scaleX(1.0015);-webkit-text-stroke:0.15px #3f4cb4;">SO-0051940-</span>
<span class="t" style="left:8.20px;top:295px;font-size:14px;line-height:16px;height:16px;color:#3f4cb4;transform:scaleX(1.0000);-webkit-text-stroke:0.15px #3f4cb4;">D</span>
<span class="t" style="left:117.40px;top:286px;font-size:14px;line-height:16px;height:16px;color:#1e2b4c;transform:scaleX(0.9573);-webkit-text-stroke:0.15px #1e2b4c;">Spring Valley</span>
<span class="t" style="left:227.00px;top:286px;font-size:14px;line-height:16px;height:16px;color:#1e2b4c;transform:scaleX(1.0177);-webkit-text-stroke:0.15px #1e2b4c;">00000qqq</span>
<span class="t" style="left:336.80px;top:286px;font-size:14px;line-height:16px;height:16px;color:#1e2b4c;transform:scaleX(1.0808);-webkit-text-stroke:0.15px #1e2b4c;">11111</span>
<span class="t" style="left:445.60px;top:276px;font-size:14px;line-height:16px;height:16px;color:#1e2b4c;transform:scaleX(0.9711);-webkit-text-stroke:0.15px #1e2b4c;">$28.35</span>
<span class="t" style="left:445.60px;top:295px;font-size:14px;line-height:16px;height:16px;color:#ee4468;transform:scaleX(0.9588);-webkit-text-stroke:0.15px #ee4468;">($28.35)</span>
<span class="t" style="left:555.20px;top:276px;font-size:14px;line-height:16px;height:16px;color:#1e2b4c;transform:scaleX(1.0490);-webkit-text-stroke:0.15px #1e2b4c;">06/02/2022</span>
<span class="t" style="left:555.20px;top:295px;font-size:14px;line-height:16px;height:16px;color:#1e2b4c;transform:scaleX(0.9846);-webkit-text-stroke:0.15px #1e2b4c;">03:55 PM</span>
<span class="t" style="left:672.40px;top:286px;font-size:14px;line-height:16px;height:16px;color:#1e2b4c;transform:scaleX(0.9898);-webkit-text-stroke:0.15px #1e2b4c;">Draft</span>
<svg class="abs" style="left:783px;top:281px" width="24" height="24"><use href="#i-note"/></svg>
<svg class="abs" style="left:826px;top:282px" width="24" height="24"><use href="#i-r1"/></svg>
<svg class="abs" style="left:858px;top:282px" width="24" height="24"><use href="#i-r2"/></svg>
<svg class="abs" style="left:890px;top:282px" width="24" height="24"><use href="#i-r3"/></svg>
<div class="abs" style="left:0;top:313px;width:923px;height:40px;background:#fff"></div>
<span class="t" style="left:8.00px;top:316px;font-size:14px;line-height:16px;height:16px;color:#3f4cb4;transform:scaleX(1.0015);-webkit-text-stroke:0.15px #3f4cb4;">SO-0051919-</span>
<span class="t" style="left:8.20px;top:335px;font-size:14px;line-height:16px;height:16px;color:#3f4cb4;transform:scaleX(1.0000);-webkit-text-stroke:0.15px #3f4cb4;">D</span>
<span class="t" style="left:117.40px;top:326px;font-size:14px;line-height:16px;height:16px;color:#1e2b4c;transform:scaleX(0.9573);-webkit-text-stroke:0.15px #1e2b4c;">Spring Valley</span>
<span class="t" style="left:227.00px;top:326px;font-size:14px;line-height:16px;height:16px;color:#1e2b4c;transform:scaleX(0.9764);-webkit-text-stroke:0.15px #1e2b4c;">00001</span>
<span class="t" style="left:445.60px;top:316px;font-size:14px;line-height:16px;height:16px;color:#1e2b4c;transform:scaleX(0.9682);-webkit-text-stroke:0.15px #1e2b4c;">$163.31</span>
<span class="t" style="left:445.60px;top:335px;font-size:14px;line-height:16px;height:16px;color:#ee4468;transform:scaleX(0.9588);-webkit-text-stroke:0.15px #ee4468;">($63.31)</span>
<span class="t" style="left:555.20px;top:316px;font-size:14px;line-height:16px;height:16px;color:#1e2b4c;transform:scaleX(1.0490);-webkit-text-stroke:0.15px #1e2b4c;">05/31/2022</span>
<span class="t" style="left:555.20px;top:335px;font-size:14px;line-height:16px;height:16px;color:#1e2b4c;transform:scaleX(0.9846);-webkit-text-stroke:0.15px #1e2b4c;">04:14 PM</span>
<span class="t" style="left:672.40px;top:326px;font-size:14px;line-height:16px;height:16px;color:#1e2b4c;transform:scaleX(0.9898);-webkit-text-stroke:0.15px #1e2b4c;">Draft</span>
<svg class="abs" style="left:783px;top:321px" width="24" height="24"><use href="#i-note"/></svg>
<svg class="abs" style="left:826px;top:322px" width="24" height="24"><use href="#i-r1"/></svg>
<svg class="abs" style="left:858px;top:322px" width="24" height="24"><use href="#i-r2"/></svg>
<svg class="abs" style="left:890px;top:322px" width="24" height="24"><use href="#i-r3"/></svg>
<div class="abs" style="left:0;top:353px;width:923px;height:40px;background:#f1f2fb"></div>
<span class="t" style="left:8.00px;top:356px;font-size:14px;line-height:16px;height:16px;color:#3f4cb4;transform:scaleX(1.0015);-webkit-text-stroke:0.15px #3f4cb4;">SO-0051867-</span>
<span class="t" style="left:8.20px;top:375px;font-size:14px;line-height:16px;height:16px;color:#3f4cb4;transform:scaleX(1.0000);-webkit-text-stroke:0.15px #3f4cb4;">D</span>
<span class="t" style="left:117.40px;top:366px;font-size:14px;line-height:16px;height:16px;color:#1e2b4c;transform:scaleX(0.9573);-webkit-text-stroke:0.15px #1e2b4c;">Spring Valley</span>
<span class="t" style="left:227.00px;top:366px;font-size:14px;line-height:16px;height:16px;color:#1e2b4c;transform:scaleX(0.9764);-webkit-text-stroke:0.15px #1e2b4c;">00001</span>
<span class="t" style="left:445.60px;top:366px;font-size:14px;line-height:16px;height:16px;color:#1e2b4c;transform:scaleX(0.9820);-webkit-text-stroke:0.15px #1e2b4c;">$699.00</span>
<span class="t" style="left:555.20px;top:356px;font-size:14px;line-height:16px;height:16px;color:#1e2b4c;transform:scaleX(1.0490);-webkit-text-stroke:0.15px #1e2b4c;">05/27/2022</span>
<span class="t" style="left:555.20px;top:375px;font-size:14px;line-height:16px;height:16px;color:#1e2b4c;transform:scaleX(0.9846);-webkit-text-stroke:0.15px #1e2b4c;">05:34 PM</span>
<span class="t" style="left:672.40px;top:366px;font-size:14px;line-height:16px;height:16px;color:#1e2b4c;transform:scaleX(0.9898);-webkit-text-stroke:0.15px #1e2b4c;">Draft</span>
<svg class="abs" style="left:783px;top:361px" width="24" height="24"><use href="#i-note"/></svg>
<svg class="abs" style="left:826px;top:362px" width="24" height="24"><use href="#i-r1"/></svg>
<svg class="abs" style="left:858px;top:362px" width="24" height="24"><use href="#i-r2"/></svg>
<svg class="abs" style="left:890px;top:362px" width="24" height="24"><use href="#i-r3"/></svg>
<div class="abs" style="left:0;top:393px;width:923px;height:40px;background:#fff"></div>
<span class="t" style="left:8.00px;top:396px;font-size:14px;line-height:16px;height:16px;color:#3f4cb4;transform:scaleX(1.0015);-webkit-text-stroke:0.15px #3f4cb4;">SO-0051859-</span>
<span class="t" style="left:8.20px;top:415px;font-size:14px;line-height:16px;height:16px;color:#3f4cb4;transform:scaleX(1.0000);-webkit-text-stroke:0.15px #3f4cb4;">D</span>
<span class="t" style="left:117.40px;top:406px;font-size:14px;line-height:16px;height:16px;color:#1e2b4c;transform:scaleX(0.9573);-webkit-text-stroke:0.15px #1e2b4c;">Spring Valley</span>
<span class="t" style="left:227.00px;top:406px;font-size:14px;line-height:16px;height:16px;color:#1e2b4c;transform:scaleX(0.9829);-webkit-text-stroke:0.15px #1e2b4c;">Walk-In</span>
<span class="t" style="left:336.80px;top:406px;font-size:14px;line-height:16px;height:16px;color:#1e2b4c;transform:scaleX(1.0808);-webkit-text-stroke:0.15px #1e2b4c;">11111</span>
<span class="t" style="left:445.60px;top:396px;font-size:14px;line-height:16px;height:16px;color:#1e2b4c;transform:scaleX(0.9682);-webkit-text-stroke:0.15px #1e2b4c;">$920.21</span>
<span class="t" style="left:445.60px;top:415px;font-size:14px;line-height:16px;height:16px;color:#ee4468;transform:scaleX(0.9630);-webkit-text-stroke:0.15px #ee4468;">($920.21)</span>
<span class="t" style="left:555.20px;top:396px;font-size:14px;line-height:16px;height:16px;color:#1e2b4c;transform:scaleX(1.0490);-webkit-text-stroke:0.15px #1e2b4c;">05/26/2022</span>
<span class="t" style="left:555.20px;top:415px;font-size:14px;line-height:16px;height:16px;color:#1e2b4c;transform:scaleX(0.9846);-webkit-text-stroke:0.15px #1e2b4c;">07:42 PM</span>
<span class="t" style="left:672.40px;top:406px;font-size:14px;line-height:16px;height:16px;color:#1e2b4c;transform:scaleX(0.9898);-webkit-text-stroke:0.15px #1e2b4c;">Draft</span>
<svg class="abs" style="left:783px;top:401px" width="24" height="24"><use href="#i-note"/></svg>
<svg class="abs" style="left:826px;top:402px" width="24" height="24"><use href="#i-r1"/></svg>
<svg class="abs" style="left:858px;top:402px" width="24" height="24"><use href="#i-r2"/></svg>
<svg class="abs" style="left:890px;top:402px" width="24" height="24"><use href="#i-r3"/></svg>
<div class="abs" style="left:0;top:433px;width:923px;height:40px;background:#f1f2fb"></div>
<span class="t" style="left:8.00px;top:436px;font-size:14px;line-height:16px;height:16px;color:#3f4cb4;transform:scaleX(1.0015);-webkit-text-stroke:0.15px #3f4cb4;">SO-0051848-</span>
<span class="t" style="left:8.20px;top:455px;font-size:14px;line-height:16px;height:16px;color:#3f4cb4;transform:scaleX(1.0000);-webkit-text-stroke:0.15px #3f4cb4;">D</span>
<span class="t" style="left:117.40px;top:446px;font-size:14px;line-height:16px;height:16px;color:#1e2b4c;transform:scaleX(0.9573);-webkit-text-stroke:0.15px #1e2b4c;">Spring Valley</span>
<span class="t" style="left:227.00px;top:446px;font-size:14px;line-height:16px;height:16px;color:#1e2b4c;transform:scaleX(1.0177);-webkit-text-stroke:0.15px #1e2b4c;">00000qqq</span>
<span class="t" style="left:336.80px;top:446px;font-size:14px;line-height:16px;height:16px;color:#1e2b4c;transform:scaleX(1.0808);-webkit-text-stroke:0.15px #1e2b4c;">11111</span>
<span class="t" style="left:445.60px;top:436px;font-size:14px;line-height:16px;height:16px;color:#1e2b4c;transform:scaleX(0.9711);-webkit-text-stroke:0.15px #1e2b4c;">$18.90</span>
<span class="t" style="left:445.60px;top:455px;font-size:14px;line-height:16px;height:16px;color:#ee4468;transform:scaleX(0.9588);-webkit-text-stroke:0.15px #ee4468;">($18.90)</span>
<span class="t" style="left:555.20px;top:436px;font-size:14px;line-height:16px;height:16px;color:#1e2b4c;transform:scaleX(1.0490);-webkit-text-stroke:0.15px #1e2b4c;">05/25/2022</span>
<span class="t" style="left:555.20px;top:455px;font-size:14px;line-height:16px;height:16px;color:#1e2b4c;transform:scaleX(0.9846);-webkit-text-stroke:0.15px #1e2b4c;">07:00 PM</span>
<span class="t" style="left:672.40px;top:446px;font-size:14px;line-height:16px;height:16px;color:#1e2b4c;transform:scaleX(0.9898);-webkit-text-stroke:0.15px #1e2b4c;">Draft</span>
<svg class="abs" style="left:783px;top:441px" width="24" height="24"><use href="#i-note"/></svg>
<svg class="abs" style="left:826px;top:442px" width="24" height="24"><use href="#i-r1"/></svg>
<svg class="abs" style="left:858px;top:442px" width="24" height="24"><use href="#i-r2"/></svg>
<svg class="abs" style="left:890px;top:442px" width="24" height="24"><use href="#i-r3"/></svg>
<div class="abs" style="left:0;top:0;width:923px;height:33px;background:#fff;border-top:1px solid #dcdde8;border-bottom:1px solid #dcdde8"></div>
<span class="t" style="left:8.00px;top:10px;font-size:12.5px;line-height:14px;height:14px;color:#1d2b4f;transform:scaleX(0.9953);-webkit-text-stroke:0.5px #1d2b4f;">Order Number</span>
<span class="t" style="left:117.60px;top:10px;font-size:12.5px;line-height:14px;height:14px;color:#1d2b4f;transform:scaleX(0.9238);-webkit-text-stroke:0.5px #1d2b4f;">Store</span>
<span class="t" style="left:226.70px;top:10px;font-size:12.5px;line-height:14px;height:14px;color:#1d2b4f;transform:scaleX(0.9652);-webkit-text-stroke:0.5px #1d2b4f;">Customer</span>
<span class="t" style="left:336.30px;top:10px;font-size:12.5px;line-height:14px;height:14px;color:#1d2b4f;transform:scaleX(0.9594);-webkit-text-stroke:0.5px #1d2b4f;">Customer Phone</span>
<span class="t" style="left:445.30px;top:10px;font-size:12.5px;line-height:14px;height:14px;color:#1d2b4f;transform:scaleX(0.9896);-webkit-text-stroke:0.5px #1d2b4f;">Total</span>
<span class="t" style="left:555.00px;top:10px;font-size:12.5px;line-height:14px;height:14px;color:#1d2b4f;transform:scaleX(0.9424);-webkit-text-stroke:0.5px #1d2b4f;">Created On</span>
<span class="t" style="left:672.00px;top:10px;font-size:12.5px;line-height:14px;height:14px;color:#1d2b4f;transform:scaleX(0.9228);-webkit-text-stroke:0.5px #1d2b4f;">Status</span>
<span class="t" style="left:781.50px;top:10px;font-size:12.5px;line-height:14px;height:14px;color:#1d2b4f;transform:scaleX(0.9972);-webkit-text-stroke:0.5px #1d2b4f;">Note</span>
<span class="t" style="left:826.50px;top:10px;font-size:12.5px;line-height:14px;height:14px;color:#1d2b4f;transform:scaleX(0.9927);-webkit-text-stroke:0.5px #1d2b4f;">Print</span>
<div class="abs" style="left:108.30000000000001px;top:0;width:1px;height:451px;background:#e2e3ed"></div>
<div class="abs" style="left:217.89999999999998px;top:0;width:1px;height:451px;background:#e2e3ed"></div>
<div class="abs" style="left:327px;top:0;width:1px;height:451px;background:#e2e3ed"></div>
<div class="abs" style="left:436px;top:0;width:1px;height:451px;background:#e2e3ed"></div>
<div class="abs" style="left:545.9px;top:0;width:1px;height:451px;background:#e2e3ed"></div>
<div class="abs" style="left:663px;top:0;width:1px;height:451px;background:#e2e3ed"></div>
<div class="abs" style="left:771.8px;top:0;width:1px;height:451px;background:#e2e3ed"></div>
<div class="abs" style="left:816.9000000000001px;top:0;width:1px;height:451px;background:#e2e3ed"></div>
<div class="abs" style="left:922.2px;top:0;width:1px;height:451px;background:#d6d8e3"></div>
<div class="abs" style="left:923.2px;top:1px;width:12px;height:450px;background:#fff"></div>
<div class="abs" style="left:0;top:0;width:935px;height:1px;background:#dcdde8"></div>
<div class="abs" style="left:925px;top:33px;width:8px;height:87px;background:#d9dbe6"></div>
</div>
<div class="abs" style="left:221px;top:672px;width:935px;height:1px;background:#dcdde8"></div>
<div class="abs" style="left:684px;top:681px;width:86px;height:36px;border-radius:3px;background:linear-gradient(100deg,#4450b4 0%,#4a57ba 45%,#5d6bce 100%)"></div>
<svg class="abs" style="left:696px;top:688.400px" width="21.500" height="21.500" viewBox="0 0 24 24"><path fill="#fff" d="M19 8h-1V3H6v5H5c-1.660 0-3 1.340-3 3v6h4v4h12v-4h4v-6c0-1.660-1.340-3-3-3zM8 5h8v3H8V5zm8 12v2H8v-4h8v2zm2-2v-2H6v2H4v-4c0-.55.45-1 1-1h14c.55 0 1 .45 1 1v4h-2z"/></svg>
<span class="t" style="left:724.70px;top:692px;font-size:14px;line-height:16px;height:16px;color:#fff;transform:scaleX(1.0254);-webkit-text-stroke:0.4px #fff;">Print</span>
<div class="abs" style="left:778px;top:681px;width:129px;height:36px;border-radius:3px;background:linear-gradient(100deg,#4450b4 0%,#4a57ba 45%,#5d6bce 100%)"></div>
<svg class="abs" style="left:790.900px;top:691.500px" width="14.400" height="14.400" viewBox="0 0 14.400 14.400"><path fill="#fff" d="M0.0 0.00h4v2.100h-4zM5.2 0.00h4v2.100h-4zM10.4 0.00h4v2.100h-4zM0.0 4.07h4v2.100h-4zM5.2 4.07h4v2.100h-4zM10.4 4.07h4v2.100h-4zM0.0 8.14h4v2.100h-4zM5.2 8.14h4v2.100h-4zM10.4 8.14h4v2.100h-4zM0.0 12.21h4v2.100h-4zM5.2 12.21h4v2.100h-4zM10.4 12.21h4v2.100h-4z"/></svg>
<span class="t" style="left:814.70px;top:692px;font-size:14px;line-height:16px;height:16px;color:#fff;transform:scaleX(0.9545);-webkit-text-stroke:0.4px #fff;">Export XLSX</span>
<div class="abs" style="left:915px;top:681px;width:121px;height:36px;border-radius:3px;background:linear-gradient(100deg,#4450b4 0%,#4a57ba 45%,#5d6bce 100%)"></div>
<svg class="abs" style="left:923px;top:687.200px" width="24" height="24" viewBox="0 0 24 24"><path fill="#fff" d="M8 16h8v2H8zm0-4h8v2H8zm6-10H6c-1.100 0-2 .9-2 2v16c0 1.100.89 2 1.990 2H18c1.100 0 2-.9 2-2V8l-6-6zm4 18H6V4h7v5h5v11z"/></svg>
<span class="t" style="left:951.40px;top:692px;font-size:14px;line-height:16px;height:16px;color:#fff;transform:scaleX(0.9505);-webkit-text-stroke:0.4px #fff;">Export PDF</span>
<div class="abs" style="left:1044px;top:681px;width:104px;height:36px;border-radius:3px;background:linear-gradient(100deg,#4450b4 0%,#4a57ba 45%,#5d6bce 100%)"></div>
<span class="t" style="left:1060.40px;top:692px;font-size:14px;line-height:16px;height:16px;color:#fff;transform:scaleX(0.9906);-webkit-text-stroke:0.4px #fff;">Copy Order</span>
<svg class="abs" style="left:1165.500px;top:144px" width="13" height="11"><path d="M0 1.200h12.100M0 5.200h12.100M0 9.200h12.100" stroke="#fff" stroke-width="1.900"/></svg>
<span class="t" style="left:1188.20px;top:141px;font-size:14px;line-height:16px;height:16px;color:#fff;transform:scaleX(0.9577);-webkit-text-stroke:0.4px #fff;">Home</span>
<svg class="abs" style="left:1336px;top:136px" width="24" height="24" viewBox="0 0 24 24"><path stroke="#fff" stroke-width="0.300" fill="#fff" d="M19.430 12.980c.04-.32.070-.64.070-.98 0-.34-.03-.66-.07-.98l2.110-1.650c.19-.15.240-.42.120-.64l-2-3.460c-.09-.16-.26-.25-.44-.25-.06 0-.12.010-.17.030l-2.490 1c-.52-.4-1.080-.73-1.690-.98l-.38-2.650C14.460 2.180 14.250 2 14 2h-4c-.25 0-.46.180-.49.420l-.38 2.650c-.61.250-1.170.59-1.690.98l-2.490-1c-.06-.02-.12-.03-.18-.03-.17 0-.34.090-.43.250l-2 3.460c-.13.220-.07.490.12.640l2.110 1.650c-.04.320-.07.650-.07.980 0 .33.030.66.070.98l-2.110 1.650c-.19.150-.24.420-.12.640l2 3.460c.09.160.26.250.44.250.06 0 .12-.01.170-.03l2.490-1c.52.4 1.080.73 1.690.98l.38 2.650c.03.240.24.420.49.420h4c.25 0 .46-.18.490-.42l.38-2.650c.61-.25 1.170-.59 1.690-.98l2.490 1c.06.020.12.030.18.030.17 0 .34-.09.43-.25l2-3.460c.12-.22.070-.49-.12-.64l-2.110-1.650zm-1.980-1.710c.04.310.05.520.05.730 0 .21-.02.430-.05.730l-.14 1.130.89.700 1.080.84-.7 1.210-1.270-.51-1.040-.42-.9.680c-.43.320-.84.560-1.250.73l-1.060.43-.16 1.130-.2 1.350h-1.400l-.19-1.350-.16-1.130-1.060-.43c-.43-.18-.83-.41-1.230-.71l-.91-.7-1.060.43-1.270.51-.7-1.210 1.080-.84.890-.7-.14-1.130c-.03-.31-.05-.54-.05-.74s.02-.43.050-.73l.14-1.130-.89-.7-1.080-.84.7-1.210 1.270.51 1.040.42.900-.68c.43-.32.840-.56 1.250-.73l1.060-.43.160-1.130.2-1.350h1.390l.19 1.350.16 1.130 1.060.43c.43.180.83.410 1.230.71l.91.7 1.060-.43 1.270-.51.7 1.210-1.070.85-.89.70.14 1.130zM12 8c-2.210 0-4 1.790-4 4s1.790 4 4 4 4-1.790 4-4-1.790-4-4-4zm0 6c-1.100 0-2-.9-2-2s.9-2 2-2 2 .9 2 2-.9 2-2 2z"/></svg>
<div class="abs" style="left:1156px;top:170px;width:208px;height:558px;overflow:hidden">
<div class="abs" style="left:8px;top:7px;width:175px;height:56px;border:1px solid #62708c;border-radius:4px"></div>
<span class="t" style="left:17.20px;top:18px;font-size:14px;line-height:16px;height:16px;color:#fff;transform:scaleX(0.9846);-webkit-text-stroke:0.4px #fff;">90</span>
<span class="t" style="left:17.50px;top:40px;font-size:12px;line-height:14px;height:14px;color:#d3d8e2;transform:scaleX(0.8693);-webkit-text-stroke:0.15px #d3d8e2;">12345</span>
<div class="abs" style="left:8px;top:71px;width:175px;height:37px;border:1px solid #62708c;border-radius:4px"></div>
<span class="t" style="left:17.20px;top:82px;font-size:14px;line-height:16px;height:16px;color:#fff;transform:scaleX(0.8903);-webkit-text-stroke:0.4px #fff;">Cat1</span>
<div class="abs" style="left:8px;top:116px;width:175px;height:37px;border:1px solid #62708c;border-radius:4px"></div>
<span class="t" style="left:17.20px;top:127px;font-size:14px;line-height:16px;height:16px;color:#fff;transform:scaleX(1.0206);-webkit-text-stroke:0.4px #fff;">category test</span>
<div class="abs" style="left:8px;top:161px;width:175px;height:37px;border:1px solid #62708c;border-radius:4px"></div>
<span class="t" style="left:17.20px;top:172px;font-size:14px;line-height:16px;height:16px;color:#fff;transform:scaleX(0.9630);-webkit-text-stroke:0.4px #fff;">category_test _1</span>
<div class="abs" style="left:8px;top:206px;width:175px;height:56px;border:1px solid #62708c;border-radius:4px"></div>
<span class="t" style="left:17.20px;top:217px;font-size:14px;line-height:16px;height:16px;color:#fff;transform:scaleX(1.0114);-webkit-text-stroke:0.4px #fff;">cattest</span>
<span class="t" style="left:17.50px;top:239px;font-size:12px;line-height:14px;height:14px;color:#d3d8e2;transform:scaleX(0.8723);-webkit-text-stroke:0.15px #d3d8e2;">12132</span>
<div class="abs" style="left:8px;top:270px;width:175px;height:56px;border:1px solid #62708c;border-radius:4px"></div>
<span class="t" style="left:17.10px;top:281px;font-size:14px;line-height:16px;height:16px;color:#fff;transform:scaleX(0.9590);font-weight:bold;">dima0</span>
<span class="t" style="left:17.50px;top:303px;font-size:12px;line-height:14px;height:14px;color:#d3d8e2;transform:scaleX(0.9908);-webkit-text-stroke:0.15px #d3d8e2;">dima0</span>
<div class="abs" style="left:8px;top:334px;width:175px;height:56px;border:1px solid #62708c;border-radius:4px"></div>
<span class="t" style="left:17.10px;top:345px;font-size:14px;line-height:16px;height:16px;color:#fff;transform:scaleX(0.9095);font-weight:bold;">dima1</span>
<span class="t" style="left:17.50px;top:367px;font-size:12px;line-height:14px;height:14px;color:#d3d8e2;transform:scaleX(0.9572);-webkit-text-stroke:0.15px #d3d8e2;">dima1</span>
<div class="abs" style="left:8px;top:398px;width:175px;height:56px;border:1px solid #62708c;border-radius:4px"></div>
<span class="t" style="left:17.10px;top:409px;font-size:14px;line-height:16px;height:16px;color:#fff;transform:scaleX(0.9590);font-weight:bold;">dima2</span>
<span class="t" style="left:17.50px;top:431px;font-size:12px;line-height:14px;height:14px;color:#d3d8e2;transform:scaleX(0.9908);-webkit-text-stroke:0.15px #d3d8e2;">dima2</span>
<div class="abs" style="left:8px;top:462px;width:175px;height:56px;border:1px solid #62708c;border-radius:4px"></div>
<span class="t" style="left:17.10px;top:473px;font-size:14px;line-height:16px;height:16px;color:#fff;transform:scaleX(0.9590);font-weight:bold;">dima3</span>
<span class="t" style="left:17.50px;top:495px;font-size:12px;line-height:14px;height:14px;color:#d3d8e2;transform:scaleX(0.9908);-webkit-text-stroke:0.15px #d3d8e2;">dima3</span>
<div class="abs" style="left:8px;top:526px;width:175px;height:56px;border:1px solid #62708c;border-radius:4px"></div>
<span class="t" style="left:17.10px;top:537px;font-size:14px;line-height:16px;height:16px;color:#fff;transform:scaleX(0.9590);font-weight:bold;">dima4</span>
<span class="t" style="left:17.50px;top:559px;font-size:12px;line-height:14px;height:14px;color:#d3d8e2;transform:scaleX(0.9908);-webkit-text-stroke:0.15px #d3d8e2;">dima4</span>
</div>
<div class="abs" style="left:1346px;top:176px;width:8px;height:388px;background:#dcdde9"></div>
<div class="abs" style="left:0;top:728px;width:1364px;height:2px;background:#493838"></div>
<div class="abs" style="left:48px;top:728px;width:343px;height:2px;background:#fff"></div>
<div class="abs" style="left:571px;top:728px;width:39px;height:2px;background:#6c5c5c"></div>
<div class="abs" style="left:812px;top:728px;width:16px;height:2px;background:#fff"></div>
</div>
</body></html>
